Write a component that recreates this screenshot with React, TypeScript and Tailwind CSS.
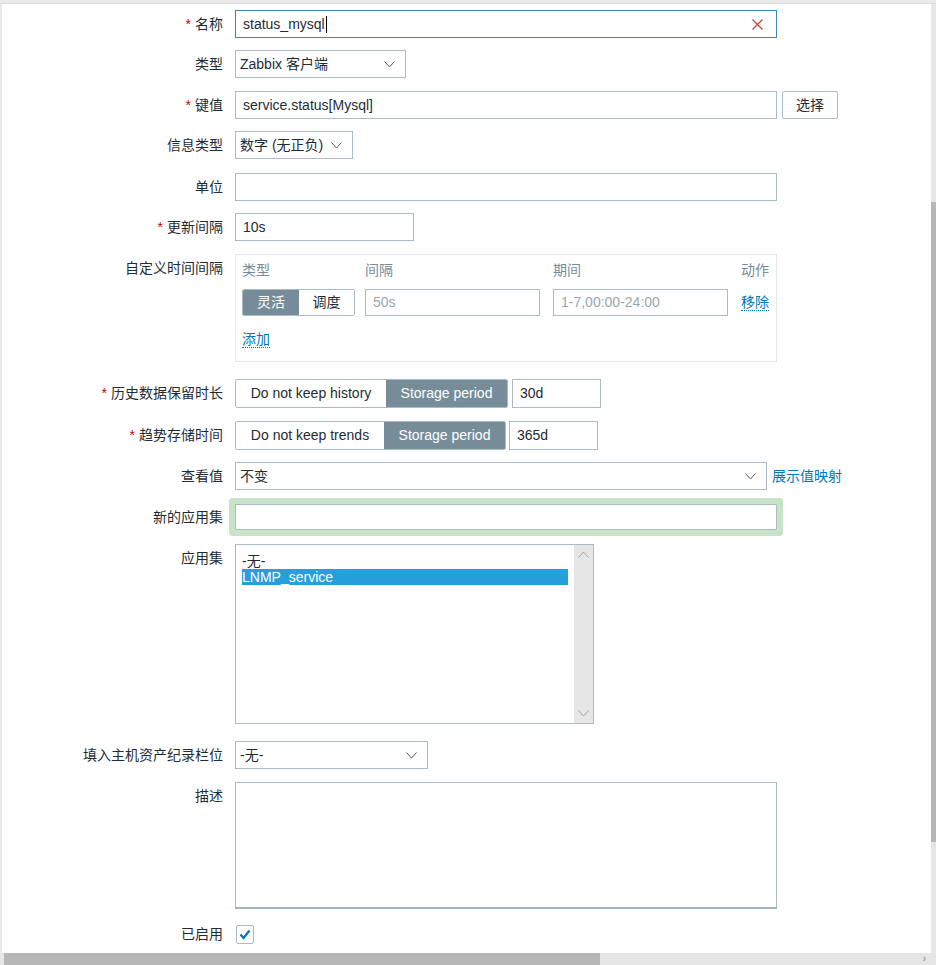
import React from 'react';

const font = { fontFamily: '"Liberation Sans", Arial, "Noto Sans CJK SC", sans-serif' };

function Chevron({ up = false, className = '' }: { up?: boolean; className?: string }) {
  return (
    <svg width="11" height="7" viewBox="0 0 11 7" className={className}>
      <polyline
        points={up ? '0.5,6.5 5.5,1 10.5,6.5' : '0.5,0.5 5.5,6 10.5,0.5'}
        fill="none"
        stroke="currentColor"
        strokeWidth="1"
      />
    </svg>
  );
}

function Label({ text, required = false, h = 'h-[28px]' }: { text: string; required?: boolean; h?: string }) {
  return (
    <div className={`${h} flex items-center justify-end whitespace-nowrap`}>
      {required && <span className="text-[#d40000] mr-[4px]">*</span>}
      {text}
    </div>
  );
}

function Row({ label, required, mt, labelH, children }: { label: string; required?: boolean; mt: string; labelH?: string; children: React.ReactNode }) {
  return (
    <div className={`grid grid-cols-[221px_1fr] gap-x-[12px] items-start ${mt}`}>
      <Label text={label} required={required} h={labelH} />
      <div className="flex items-center">{children}</div>
    </div>
  );
}

function Select({ value, w }: { value: string; w: string }) {
  return (
    <div className={`${w} h-[28px] border border-[#acbbc2] bg-white flex items-center justify-between pl-[4px] pr-[10px]`}>
      <span className="whitespace-nowrap">{value}</span>
      <Chevron className="text-[#4f5b61]" />
    </div>
  );
}

function Input({ value = '', w, placeholder = false, h = 'h-[28px]' }: { value?: string; w: string; placeholder?: boolean; h?: string }) {
  return (
    <div className={`${w} ${h} border border-[#acbbc2] bg-white flex items-center px-[7px] ${placeholder ? 'text-[#9ba7ad]' : ''}`}>
      {value}
    </div>
  );
}

function Segmented({ left, right, lw, rw }: { left: string; right: string; lw: string; rw: string }) {
  return (
    <div className="flex h-[29px] border border-[#acbbc2] rounded-[2px] overflow-hidden">
      <div className={`${lw} flex items-center justify-center bg-white whitespace-nowrap`}>{left}</div>
      <div className={`${rw} flex items-center justify-center bg-[#768d99] text-white whitespace-nowrap`}>{right}</div>
    </div>
  );
}

function DottedLink({ text }: { text: string }) {
  return <span className="text-[#0275b8] leading-[16px] border-b border-dotted border-[#0275b8]">{text}</span>;
}

export default function App() {
  return (
    <div className="w-[936px] h-[965px] flex flex-col bg-white overflow-hidden text-[14px] text-[#1f2c33]" style={font}>
      {/* top strip */}
      <div className="h-[4px] bg-[#e9e9e9] border-b border-[#dcdcdc] shrink-0" />

      <div className="flex flex-1 min-h-0">
        <div className="w-[2px] bg-[#e9e9e9] shrink-0" />

        {/* form */}
        <div className="flex-1 min-w-0 flex flex-col">
          <Row label="名称" required mt="mt-[6px]">
            <div className="w-[542px] h-[28px] border border-[#3b86c4] bg-white flex items-center justify-between px-[7px] pr-[13px]">
              <span className="flex items-center">
                status_mysql
                <span className="w-[1px] h-[17px] bg-black ml-[1px]" />
              </span>
              <svg width="11" height="11" viewBox="0 0 11 11">
                <path d="M0.5 0.5 L10.5 10.5 M10.5 0.5 L0.5 10.5" stroke="#c9413a" strokeWidth="1.2" />
              </svg>
            </div>
          </Row>

          <Row label="类型" mt="mt-[12px]">
            <Select value="Zabbix 客户端" w="w-[171px]" />
          </Row>

          <Row label="键值" required mt="mt-[13px]">
            <Input value="service.status[Mysql]" w="w-[542px]" />
            <div className="ml-[5px] w-[56px] h-[28px] border border-[#acbbc2] rounded-[2px] bg-white flex items-center justify-center">选择</div>
          </Row>

          <Row label="信息类型" mt="mt-[12px]">
            <Select value="数字 (无正负)" w="w-[118px]" />
          </Row>

          <Row label="单位" mt="mt-[14px]">
            <Input w="w-[542px]" />
          </Row>

          <Row label="更新间隔" required mt="mt-[12px]">
            <Input value="10s" w="w-[179px]" />
          </Row>

          <Row label="自定义时间间隔" mt="mt-[13px]">
            <div className="w-[542px] h-[108px] border border-[#e4e8eb] bg-white pl-[6px] pt-[7px]">
              <div className="grid grid-cols-[123px_188px_188px_auto] text-[#768d99] leading-[16px]">
                <span>类型</span>
                <span>间隔</span>
                <span>期间</span>
                <span>动作</span>
              </div>
              <div className="grid grid-cols-[123px_188px_188px_auto] items-center mt-[11px]">
                <div className="w-[113px] h-[27px] flex border border-[#acbbc2] rounded-[2px] overflow-hidden">
                  <div className="w-[56px] flex items-center justify-center bg-[#768d99] text-white">灵活</div>
                  <div className="flex-1 flex items-center justify-center bg-white">调度</div>
                </div>
                <Input value="50s" w="w-[175px]" placeholder h="h-[27px]" />
                <Input value="1-7,00:00-24:00" w="w-[175px]" placeholder h="h-[27px]" />
                <div>
                  <DottedLink text="移除" />
                </div>
              </div>
              <div className="mt-[13px]">
                <DottedLink text="添加" />
              </div>
            </div>
          </Row>

          <Row label="历史数据保留时长" required mt="mt-[17px]" labelH="h-[29px]">
            <Segmented left="Do not keep history" right="Storage period" lw="w-[150px]" rw="w-[121px]" />
            <div className="ml-[4px] w-[89px] h-[29px] border border-[#acbbc2] bg-white flex items-center px-[7px]">30d</div>
          </Row>

          <Row label="趋势存储时间" required mt="mt-[13px]" labelH="h-[29px]">
            <Segmented left="Do not keep trends" right="Storage period" lw="w-[148px]" rw="w-[121px]" />
            <div className="ml-[3px] w-[89px] h-[29px] border border-[#acbbc2] bg-white flex items-center px-[7px]">365d</div>
          </Row>

          <Row label="查看值" mt="mt-[12px]">
            <Select value="不变" w="w-[532px]" />
            <span className="ml-[5px] text-[#0275b8] whitespace-nowrap">展示值映射</span>
          </Row>

          <Row label="新的应用集" mt="mt-[14px]" labelH="h-[26px]">
            <div className="w-[542px] h-[26px] border border-[#acbbc2] bg-white rounded-[1px] shadow-[0_0_0_6px_#c7e3c8]" />
          </Row>

          <Row label="应用集" mt="mt-[14px]">
            <div className="w-[359px] h-[180px] border border-[#acbbc2] bg-white flex">
              <div className="flex-1 pl-[6px] pr-[6px] pt-[8px] leading-[16px]">
                <div>-无-</div>
                <div className="bg-[#26a0da] text-white">LNMP_service</div>
              </div>
              <div className="w-[19px] bg-[#e6e6e6] flex flex-col items-center justify-between py-[6px] text-[#a3a3a3]">
                <Chevron up />
                <Chevron />
              </div>
            </div>
          </Row>

          <Row label="填入主机资产纪录栏位" mt="mt-[17px]">
            <Select value="-无-" w="w-[193px]" />
          </Row>

          <Row label="描述" mt="mt-[13px]">
            <div className="w-[542px] h-[127px] border border-[#acbbc2] border-b-[2px] border-b-[#a4b4bc] bg-white" />
          </Row>

          <Row label="已启用" mt="mt-[16px]" labelH="h-[19px]">
            <div className="ml-[1px] w-[18px] h-[19px] border border-[#acbbc2] rounded-[2px] bg-white flex items-center justify-center">
              <svg width="12" height="11" viewBox="0 0 12 11">
                <polyline points="1.5,5.5 4.5,9 10.5,1.5" fill="none" stroke="#0275b8" strokeWidth="2.2" />
              </svg>
            </div>
          </Row>
        </div>

        {/* vertical scrollbar */}
        <div className="w-[5px] bg-[#e6e6e6] shrink-0 flex flex-col">
          <div className="h-[198px]" />
          <div className="h-[640px] bg-[#b6b6b6]" />
        </div>
      </div>

      {/* horizontal scrollbar */}
      <div className="h-[12px] bg-[#e6e6e6] shrink-0 flex items-center">
        <div className="ml-[4px] w-[596px] h-[12px] bg-[#b7b7b7]" />
        <div className="flex-1" />
        <span className="mr-[10px] text-[#808080] text-[10px] leading-none">›</span>
      </div>
    </div>
  );
}
